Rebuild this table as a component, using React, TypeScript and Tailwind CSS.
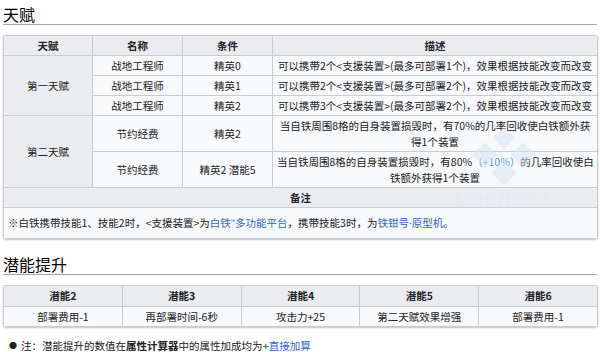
import React from 'react';

const font = "font-['Noto_Sans_CJK_SC','Noto_Sans',sans-serif]";
const link = 'text-[#3366cc]';

const td = 'border border-[#c8ccd1] px-[4px] py-[1.5px] text-center align-middle';
const th = 'border border-[#c8ccd1] bg-[#eaecf0] px-[4px] py-[1.5px] text-center font-bold';

const Heading = ({ children }: { children: React.ReactNode }) => (
  <h2 className="border-b border-[#a2a9b1] text-[16px] leading-[20px] text-black">{children}</h2>
);

const potentials = [
  ['潜能2', '部署费用-1'],
  ['潜能3', '再部署时间-6秒'],
  ['潜能4', '攻击力+25'],
  ['潜能5', '第二天赋效果增强'],
  ['潜能6', '部署费用-1'],
];

export default function App() {
  return (
    <div className={`${font} relative h-[352px] w-[600px] overflow-hidden bg-white px-[3px] pt-[4px] text-[10.5px] leading-[16px] text-[#202122]`}>
      <Heading>天赋</Heading>

      <div className="mt-[10px] w-[595px] overflow-hidden rounded-[3px] shadow-[0_1px_2px_rgba(0,0,0,0.25)]">
        <table className="w-full table-fixed border-collapse bg-[#f8f9fa]">
          <colgroup>
            <col className="w-[89px]" />
            <col className="w-[90px]" />
            <col className="w-[90px]" />
            <col />
          </colgroup>
          <thead>
            <tr>
              <th className={th}>天赋</th>
              <th className={th}>名称</th>
              <th className={th}>条件</th>
              <th className={th}>描述</th>
            </tr>
          </thead>
          <tbody>
            <tr>
              <td rowSpan={3} className={`${td} bg-[#eaecf0]`}>第一天赋</td>
              <td className={td}>战地工程师</td>
              <td className={td}>精英0</td>
              <td className={`${td} whitespace-nowrap`}>可以携带2个&lt;支援装置&gt;(最多可部署1个)，效果根据技能改变而改变</td>
            </tr>
            <tr>
              <td className={td}>战地工程师</td>
              <td className={td}>精英1</td>
              <td className={`${td} whitespace-nowrap`}>可以携带2个&lt;支援装置&gt;(最多可部署2个)，效果根据技能改变而改变</td>
            </tr>
            <tr>
              <td className={td}>战地工程师</td>
              <td className={td}>精英2</td>
              <td className={`${td} whitespace-nowrap`}>可以携带3个&lt;支援装置&gt;(最多可部署2个)，效果根据技能改变而改变</td>
            </tr>
            <tr>
              <td rowSpan={2} className={`${td} bg-[#eaecf0]`}>第二天赋</td>
              <td className={td}>节约经费</td>
              <td className={td}>精英2</td>
              <td className={`${td} whitespace-nowrap`}>
                当自铁周围8格的自身装置损毁时，有70%的几率回收使白铁额外获
                <br />
                得1个装置
              </td>
            </tr>
            <tr>
              <td className={td}>节约经费</td>
              <td className={td}>精英2 潜能5</td>
              <td className={`${td} whitespace-nowrap`}>
                当自铁周围8格的自身装置损毁时，有80%<span className="text-[#3d9be9]">（+10%）</span>的几率回收使白
                <br />
                铁额外获得1个装置
              </td>
            </tr>
            <tr>
              <th colSpan={4} className={th}>备注</th>
            </tr>
            <tr>
              <td colSpan={4} className="border border-[#c8ccd1] px-[4px] pb-[7px] pt-[7px] text-left">
                ※白铁携带技能1、技能2时，&lt;支援装置&gt;为<span className={link}>白铁<sup className="text-[6px]">™</sup>多功能平台</span>，携带技能3时，为<span className={link}>铁钳号<span className="font-['Noto_Sans',sans-serif]">·</span>原型机</span>。
              </td>
            </tr>
          </tbody>
        </table>
      </div>

      <div className="mt-[15px]">
        <Heading>潜能提升</Heading>
      </div>

      <div className="mt-[10px] w-[595px] overflow-hidden rounded-[3px] shadow-[0_1px_2px_rgba(0,0,0,0.25)]">
        <table className="w-full table-fixed border-collapse bg-[#f8f9fa]">
          <thead>
            <tr>
              {potentials.map(([k]) => (
                <th key={k} className={`${th} py-[2px]`}>{k}</th>
              ))}
            </tr>
          </thead>
          <tbody>
            <tr>
              {potentials.map(([k, v]) => (
                <td key={k} className={td}>{v}</td>
              ))}
            </tr>
          </tbody>
        </table>
      </div>

      <ul className="mt-[11px] pl-[6px]">
        <li className="flex items-center gap-[4px]">
          <span className="text-[8px]">●</span>
          <span>
            注：潜能提升的数值在<b>属性计算器</b>中的属性加成均为<b className="text-[#1a8f1a]">+</b>
            <span className={link}>直接加算</span>
          </span>
        </li>
      </ul>

      {/* faint watermark */}
      <div className="pointer-events-none absolute left-[455px] top-[128px] flex flex-col items-center opacity-50">
        <svg width="90" height="62" viewBox="0 0 90 62">
          <g fill="#d6e2f5">
            <rect x="37" y="2" width="16" height="16" transform="rotate(45 45 10)" />
            <rect x="17" y="18" width="18" height="18" transform="rotate(45 26 27)" />
            <rect x="55" y="18" width="18" height="18" transform="rotate(45 64 27)" />
            <rect x="36" y="36" width="18" height="18" transform="rotate(45 45 45)" />
          </g>
        </svg>
        <span className="mt-[2px] font-['Noto_Sans',sans-serif] text-[16px] font-semibold leading-[16px] tracking-[1px] text-[#e2e9f5]">MOONCELL</span>
      </div>
    </div>
  );
}
